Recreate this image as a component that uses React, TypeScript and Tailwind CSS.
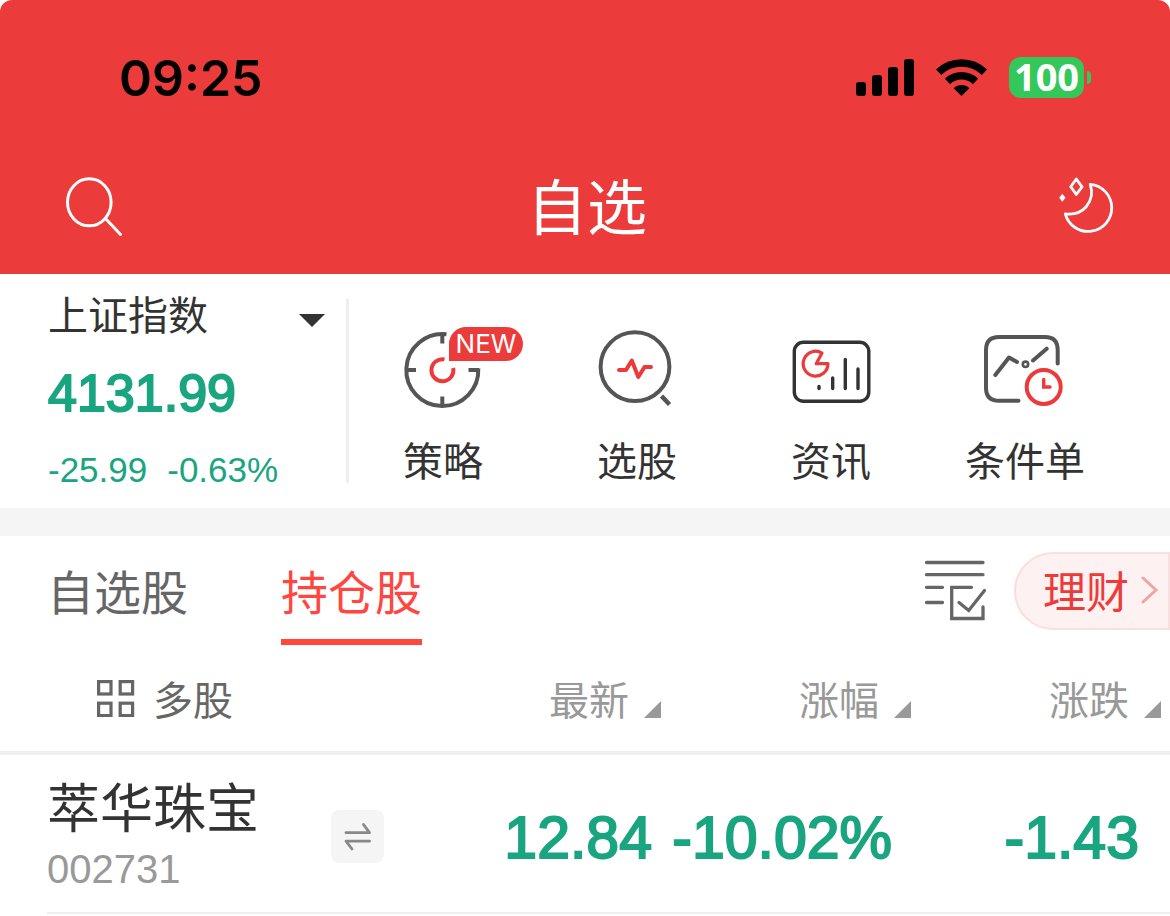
import React from "react";

const cjk = "font-['Noto_Sans_CJK_SC',sans-serif]";
const digits = "font-['Liberation_Sans',sans-serif]";
const medium = "[-webkit-text-stroke:2px_#1aa581]";

function SignalIcon() {
  return (
    <svg width="58" height="40" viewBox="856 58 58 40" aria-hidden="true">
      <rect x="856" y="82" width="10" height="14" rx="3" />
      <rect x="872" y="75" width="10" height="21" rx="3" />
      <rect x="888" y="67" width="10" height="29" rx="3" />
      <rect x="904" y="59" width="10" height="37" rx="3" />
    </svg>
  );
}

function WifiIcon() {
  return (
    <svg width="51" height="40" viewBox="936 58 51 40" aria-hidden="true">
      <g fill="none" stroke="#000" strokeWidth="7.6">
        <path d="M938.6 72.2A33.2 33.2 0 0 1 984.4 72.2" />
        <path d="M947.5 81.4A20.3 20.3 0 0 1 975.5 81.4" />
      </g>
      <path d="M961.5 96 953.6 88.2A11.4 11.4 0 0 1 969.4 88.2Z" />
    </svg>
  );
}

function SearchIcon() {
  return (
    <svg width="60" height="64" viewBox="64 175 60 64" fill="none" stroke="#fff" strokeWidth="3" strokeLinecap="round" aria-hidden="true">
      <ellipse cx="89.3" cy="202.3" rx="21.8" ry="23.5" />
      <path d="M105.5 218.5 120.5 234.5" />
    </svg>
  );
}

function MoonIcon() {
  return (
    <svg width="64" height="60" viewBox="1050 177.5 64 60" fill="none" stroke="#fff" strokeWidth="2.8" strokeLinejoin="round" aria-hidden="true">
      <path d="M1090.2 184.8A23.6 23.6 0 1 1 1065.3 214.3C1074 215.3 1081 213.2 1086 207.5C1091.5 201 1093 193 1090.2 184.8Z" />
      <path d="M1076.3 179.5 1082 187.3 1076.3 195 1070.7 187.3Z" />
      <path d="M1062.3 194.3 1065.5 198.3 1062.3 202.3 1059.2 198.3Z" fill="#fff" stroke="none" />
    </svg>
  );
}

function StrategyIcon() {
  return (
    <svg width="120" height="92" viewBox="383 322 120 92" fill="none" stroke="#555" strokeWidth="4" aria-hidden="true">
      <path d="M446.5 334.3A36 36 0 1 0 478.3 368.5" />
      <path d="M442.3 334V343.5M406 370H416M468.5 370H479M442.3 396.5V406" />
      <path d="M444.5 359.4A11 11 0 1 0 453.2 368" stroke="#ec3a3b" />
    </svg>
  );
}

function PickIcon() {
  return (
    <svg width="120" height="92" viewBox="577 322 120 92" fill="none" stroke="#555" strokeWidth="4" strokeLinejoin="round" aria-hidden="true">
      <circle cx="635" cy="366.7" r="34.4" />
      <path d="M661.5 396 669.5 404.5" strokeWidth="4.5" />
      <path d="M619 370H626L631.8 360.5 638.3 377 644.5 367H651" stroke="#ec3a3b" strokeLinecap="round" />
    </svg>
  );
}

function NewsIcon() {
  return (
    <svg width="120" height="92" viewBox="771 322 120 92" fill="none" stroke="#333" strokeWidth="3.4" strokeLinecap="round" strokeLinejoin="round" aria-hidden="true">
      <rect x="794.3" y="342.3" width="74.5" height="59" rx="9" />
      <path d="M819 386.5V388.5M832.7 378V388.5M845.3 359.5V388.5M858 369V388.5" />
      <path d="M822 353A12.4 12.4 0 1 0 828 363.7H816.2Z" stroke="#ec3a3b" strokeWidth="3.2" />
    </svg>
  );
}

function OrderIcon() {
  return (
    <svg width="120" height="92" viewBox="965 322 120 92" fill="none" stroke="#555" strokeWidth="4" strokeLinecap="round" strokeLinejoin="round" aria-hidden="true">
      <path d="M1057.7 363.5V350Q1057.7 337 1045 337H999Q986 337 986 350V388Q986 400.8 999 400.8H1018.5" />
      <path d="M995.3 375 1009 357.5 1017 362M1033 360.5 1046.7 348.7" />
      <circle cx="1025.5" cy="364.3" r="2.7" strokeWidth="2.6" />
      <g stroke="#ec3a3b">
        <circle cx="1043.7" cy="387" r="17" />
        <path d="M1043.7 379.5V387H1050" strokeWidth="3.4" strokeLinejoin="miter" />
      </g>
    </svg>
  );
}

function ListCheckIcon() {
  return (
    <svg width="66" height="66" viewBox="922 558 66 66" fill="none" stroke="#666" strokeWidth="3.3" strokeLinecap="round" aria-hidden="true">
      <path d="M926.5 562.5H983M926.5 574.7H983M926.5 587.3H942.5M926.5 602.5H942.5" />
      <path d="M971.5 587.3H951.7V618.5H983V607" />
      <path d="M959 602.5 968.7 610.5 984.5 590.5" />
    </svg>
  );
}

function GridIcon() {
  return (
    <svg width="38" height="38" viewBox="0 0 38 38" fill="none" stroke="#666" strokeWidth="3.2" aria-hidden="true">
      <rect x="1.6" y="2.6" width="12.4" height="12.4" />
      <rect x="23.2" y="2.6" width="12.4" height="12.4" />
      <rect x="1.6" y="24.2" width="12.4" height="12.4" />
      <rect x="23.2" y="24.2" width="12.4" height="12.4" />
    </svg>
  );
}

function SwapIcon() {
  return (
    <svg width="53" height="53" viewBox="331 810 53 53" fill="none" stroke="#888" strokeWidth="2.8" strokeLinecap="round" strokeLinejoin="round" aria-hidden="true">
      <path d="M346 832.7H369.5L363.5 824.5M369.5 841.2H346L352 849" />
    </svg>
  );
}

const shortcuts = [
  { label: "策略", icon: <StrategyIcon />, badge: "NEW" },
  { label: "选股", icon: <PickIcon /> },
  { label: "资讯", icon: <NewsIcon /> },
  { label: "条件单", icon: <OrderIcon /> },
];

const columns = ["最新", "涨幅", "涨跌"];

export default function App() {
  return (
    <div className={`min-h-screen bg-white text-[#333] ${cjk}`}>
      <header className="rounded-t-xl bg-[#ec3b3b]">
        <div className="flex h-[155px] items-center justify-between pr-[79px] pl-[119px]">
          <time className="font-['Inter',sans-serif] text-[50px] leading-none font-semibold text-black">09:25</time>
          <div className="flex items-center gap-[22px]">
            <SignalIcon />
            <WifiIcon />
            <div className="flex items-center gap-[3px]">
              <span className="flex h-[41px] w-[75px] items-center justify-center rounded-xl bg-[#34c759] pb-[3px] font-['Noto_Sans',sans-serif] text-[38px] leading-none font-bold text-white">
                100
              </span>
              <span className="h-[13px] w-1 rounded-r-full bg-[#34c759]" />
            </div>
          </div>
        </div>
        <div className="flex h-[119px] items-center justify-between pr-14 pb-4 pl-16">
          <button type="button" aria-label="搜索"><SearchIcon /></button>
          <h1 className="pb-1.5 text-[60px] leading-none font-normal text-white">自选</h1>
          <button type="button" aria-label="夜间模式"><MoonIcon /></button>
        </div>
      </header>

      <section className="flex items-center">
        <div className="flex w-[346px] shrink-0 flex-col pr-[21px] pl-12">
          <button type="button" className="flex h-[78px] items-center justify-between">
            <span className="text-[40px] leading-none">上证指数</span>
            <svg width="26" height="13" viewBox="0 0 26 13" className="mt-3.5" aria-hidden="true">
              <path d="M0 0H26L13 13Z" fill="#333" />
            </svg>
          </button>
          <p className={`flex h-[78px] items-center pt-1 text-[52px] leading-none text-[#1aa581] ${digits} ${medium}`}>4131.99</p>
          <p className={`flex h-[78px] items-center gap-5 text-[35px] leading-none text-[#1aa581] ${digits}`}>
            <span>-25.99</span>
            <span>-0.63%</span>
          </p>
        </div>
        <div className="h-[184px] w-[3px] shrink-0 bg-[#eee]" />
        <nav className="flex flex-1 justify-between self-stretch pt-12 pr-[85px] pl-[34px]">
          {shortcuts.map((s) => (
            <a key={s.label} href="#" className="relative flex w-[120px] flex-col items-center">
              {s.icon}
              {s.badge && (
                <span className="absolute top-[5px] left-[66px] flex h-[34px] w-[74px] items-center justify-center rounded-full rounded-bl-none bg-[#ec3b3b] font-['Inter',sans-serif] text-[26px] leading-none text-white">
                  {s.badge}
                </span>
              )}
              <span className="mt-[15px] text-[40px] leading-[60px] whitespace-nowrap">{s.label}</span>
            </a>
          ))}
        </nav>
      </section>

      <div className="h-7 bg-[#f5f5f5]" />

      <section className="flex h-[109px] items-stretch justify-between">
        <div className="flex gap-[93px] pl-[47px]">
          <button type="button" className="border-b-[6px] border-transparent pt-1 text-[47px] leading-none text-[#666]">
            自选股
          </button>
          <button type="button" className="border-b-[6px] border-[#ff463f] pt-1 text-[47px] leading-none text-[#ff463f]">
            持仓股
          </button>
        </div>
        <div className="flex items-center gap-[26px]">
          <button type="button" aria-label="编辑列表"><ListCheckIcon /></button>
          <button type="button" className="flex h-[78px] w-[156px] items-center gap-3 rounded-l-full border-2 border-[#fadfdf] bg-[#fdf1f1] pb-0.5 pl-[27px] text-[#ec3b3b]">
            <span className="shrink-0 text-[43px] leading-none">理财</span>
            <svg width="18" height="30" viewBox="0 0 18 30" className="shrink-0" fill="none" stroke="#f0a5a5" strokeWidth="3" strokeLinecap="round" aria-hidden="true">
              <path d="M2 3 15 15 2 27" />
            </svg>
          </button>
        </div>
      </section>

      <table className="w-full table-fixed border-separate border-spacing-0">
        <thead>
          <tr>
            <th scope="col" className="h-[110px] border-b-4 border-[#efefef] p-0 pl-[97px] font-normal">
              <button type="button" className="flex items-center gap-[18px] text-[#666]">
                <GridIcon />
                <span className="text-[40px] leading-none">多股</span>
              </button>
            </th>
            {columns.map((c) => (
              <th key={c} scope="col" className="w-[250px] border-b-4 border-[#efefef] p-0 pr-[9px] font-normal">
                <button type="button" className="ml-auto flex items-center gap-[15px] text-[#999]">
                  <span className="text-[40px] leading-none">{c}</span>
                  <svg width="17" height="17" viewBox="0 0 17 17" className="mt-[22px]" aria-hidden="true">
                    <path d="M17 0V17H0Z" fill="#999" />
                  </svg>
                </button>
              </th>
            ))}
          </tr>
        </thead>
        <tbody>
          <tr>
            <td className="p-0 pl-[47px]">
              <div className="flex h-[159px] items-center border-b-2 border-[#efefef]">
                <div className="w-[284px] shrink-0">
                  <div className="text-[53px] leading-[70px]">萃华珠宝</div>
                  <div className={`text-[40px] leading-[58px] text-[#999] ${digits}`}>002731</div>
                </div>
                <button type="button" aria-label="切换" className="mt-1.5 rounded-lg bg-[#f5f5f5]"><SwapIcon /></button>
              </div>
            </td>
            <td className={`border-b-2 border-[#efefef] p-0 pt-2.5 pr-[18px] text-right text-[59px] leading-none whitespace-nowrap text-[#1aa581] ${digits} ${medium}`}>12.84</td>
            <td className={`border-b-2 border-[#efefef] p-0 pt-2.5 pr-[28px] text-right text-[59px] leading-none whitespace-nowrap text-[#1aa581] ${digits} ${medium}`}>-10.02%</td>
            <td className={`border-b-2 border-[#efefef] p-0 pt-2.5 pr-[31px] text-right text-[59px] leading-none whitespace-nowrap text-[#1aa581] ${digits} ${medium}`}>-1.43</td>
          </tr>
        </tbody>
      </table>
    </div>
  );
}
